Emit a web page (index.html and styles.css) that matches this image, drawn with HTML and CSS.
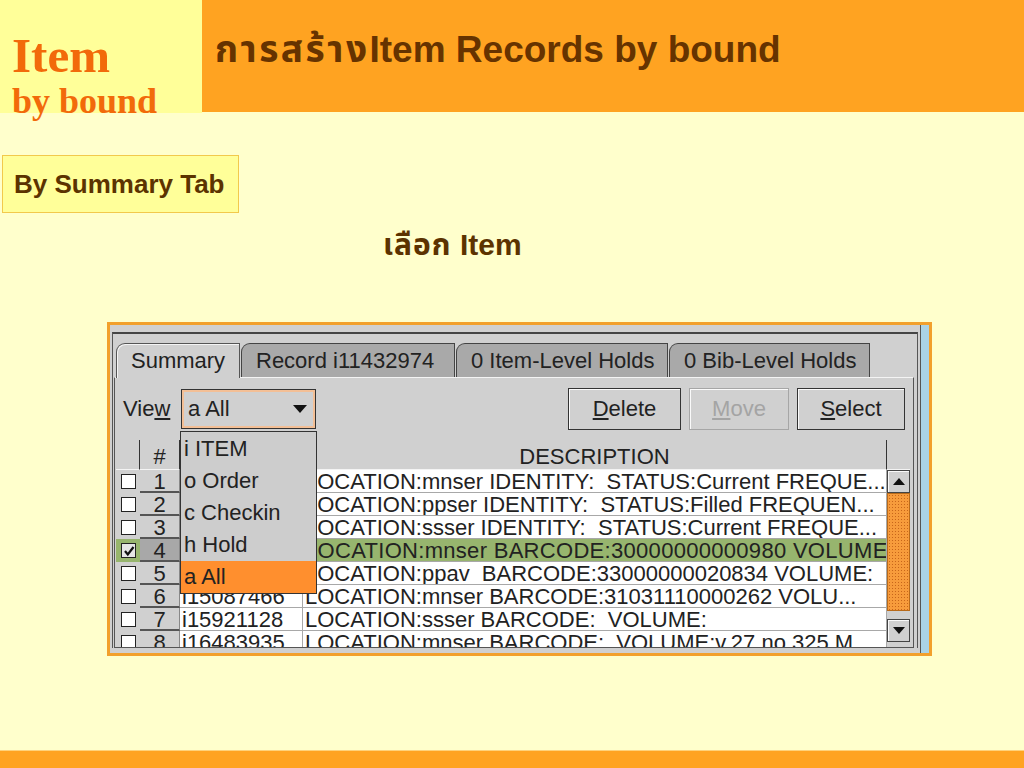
FILE: index.html
```html
<!DOCTYPE html>
<html lang="th">
<head>
    <meta charset="UTF-8">
    <meta name="viewport" content="width=device-width, initial-scale=1.0">
    <title>Item by bound</title>
    <link rel="stylesheet" href="styles.css">
</head>
<body>
<div class="slide">
    <header class="top">
        <div class="brand">
            <div class="brand-main">Item</div>
            <div class="brand-sub">by bound</div>
        </div>
        <h1 class="title"><span class="th-wide">การสร้าง</span>Item Records by bound</h1>
    </header>

    <div class="section-tag">By Summary Tab</div>
    <p class="step"><span class="th">เลือก</span> Item</p>

    <div class="shot">
        <div class="win">
            <div class="frame">
                <div class="tabs">
                    <div class="tab active">Summary</div>
                    <div class="tab">Record i11432974</div>
                    <div class="tab">0 Item-Level Holds</div>
                    <div class="tab">0 Bib-Level Holds</div>
                </div>
                <div class="tab-body">
                    <div class="toolbar">
                        <span class="view-label">Vie<u>w</u></span>
                        <div class="combo">
                            <span class="combo-value">a All</span>
                            <svg class="combo-arrow" width="14" height="8" viewBox="0 0 14 8"><path d="M0 0 H14 L7 8 Z" fill="#111"/></svg>
                            <ul class="combo-list">
                                <li>i ITEM</li>
                                <li>o Order</li>
                                <li>c Checkin</li>
                                <li>h Hold</li>
                                <li class="picked">a All</li>
                            </ul>
                        </div>
                        <div class="buttons">
                            <button class="btn btn-delete"><u>D</u>elete</button>
                            <button class="btn btn-move" disabled><u>M</u>ove</button>
                            <button class="btn btn-select"><u>S</u>elect</button>
                        </div>
                    </div>

                    <div class="grid">
                        <div class="hcell"></div>
                        <div class="hcell">#</div>
                        <div class="hcell"></div>
                        <div class="hcell">DESCRIPTION</div>
                        <div class="hcell hcell-last"></div>

                        <div class="chk"><span class="box"></span></div>
                        <div class="num">1</div>
                        <div class="cell">i11432970</div>
                        <div class="cell">LOCATION:mnser IDENTITY:&nbsp; STATUS:Current FREQUE...</div>

                        <div class="chk"><span class="box"></span></div>
                        <div class="num">2</div>
                        <div class="cell">i11432971</div>
                        <div class="cell">LOCATION:ppser IDENTITY:&nbsp; STATUS:Filled FREQUEN...</div>

                        <div class="chk"><span class="box"></span></div>
                        <div class="num">3</div>
                        <div class="cell">i11432972</div>
                        <div class="cell">LOCATION:ssser IDENTITY:&nbsp; STATUS:Current FREQUE...</div>

                        <div class="chk sel"><span class="box checked"><svg width="12" height="12" viewBox="0 0 12 12"><path d="M2 6 L4.8 9.5 L10.5 2" stroke="#111" stroke-width="2.2" fill="none"/></svg></span></div>
                        <div class="num sel">4</div>
                        <div class="cell sel">i11432974</div>
                        <div class="cell sel wide-digits">LOCATION:mnser BARCODE:30000000000980 VOLUME</div>

                        <div class="chk"><span class="box"></span></div>
                        <div class="num">5</div>
                        <div class="cell">i12563320</div>
                        <div class="cell">LOCATION:ppav&nbsp; BARCODE:33000000020834 VOLUME:</div>

                        <div class="chk"><span class="box"></span></div>
                        <div class="num">6</div>
                        <div class="cell">i15087466</div>
                        <div class="cell">LOCATION:mnser BARCODE:31031110000262 VOLU...</div>

                        <div class="chk"><span class="box"></span></div>
                        <div class="num">7</div>
                        <div class="cell">i15921128</div>
                        <div class="cell">LOCATION:ssser BARCODE:&nbsp; VOLUME:</div>

                        <div class="chk"><span class="box"></span></div>
                        <div class="num">8</div>
                        <div class="cell">i16483935</div>
                        <div class="cell">LOCATION:mnser BARCODE:&nbsp; VOLUME:v.27 no.325 M...</div>

                        <div class="scrollbar">
                            <div class="sb-btn"><svg width="12" height="7" viewBox="0 0 12 7"><path d="M0 7 H12 L6 0 Z" fill="#111"/></svg></div>
                            <div class="sb-thumb"></div>
                            <div class="sb-track"></div>
                            <div class="sb-btn"><svg width="12" height="7" viewBox="0 0 12 7"><path d="M0 0 H12 L6 7 Z" fill="#111"/></svg></div>
                        </div>
                    </div>
                </div>
            </div>
        </div>
        <div class="edge"></div>
    </div>

    <footer class="bottom-bar"></footer>
</div>
</body>
</html>
```

FILE: styles.css
```css
body {
    margin: 0;
    background-color: #ffffcc;
    font-family: 'Liberation Sans', 'Noto Sans Thai', 'Noto Sans', sans-serif;
}
.slide {
    display: flex;
    flex-direction: column;
    width: 1024px;
    height: 768px;
    overflow: hidden;
}

/* header */
.top {
    display: flex;
    height: 113px;
}
.brand {
    width: 190px;
    padding-left: 12px;
    background-color: #ffff99;
    font-family: 'Liberation Serif', serif;
    font-weight: bold;
    color: #f26a0a;
}
.brand-main {
    font-size: 49px;
    line-height: 48px;
    padding-top: 32px;
    height: 51px;
}
.brand-sub {
    font-size: 36px;
    line-height: 36px;
    white-space: nowrap;
}
.title {
    flex: 1;
    margin: 0;
    height: 82px;
    padding: 30px 0 0 13px;
    background-color: #ffa321;
    color: #663300;
    font-size: 37px;
    font-weight: bold;
    line-height: 40px;
}
.th-wide {
    letter-spacing: 2.5px;
}

/* captions */
.section-tag {
    width: 224px;
    height: 56px;
    margin: 42px 0 0 2px;
    padding-left: 11px;
    background-color: #ffff99;
    border: 1px solid #f2c94c;
    color: #5c3300;
    font-size: 26px;
    font-weight: bold;
    line-height: 56px;
}
.step {
    margin: 14px 0 0 383px;
    color: #5c3300;
    font-size: 30px;
    font-weight: bold;
    line-height: 36px;
}
.step .th {
    letter-spacing: 1px;
}

/* application screenshot */
.shot {
    display: flex;
    width: 819px;
    height: 328px;
    margin: 59px 0 0 107px;
    border: 3px solid #f2a02c;
    color: #222;
    font-size: 22px;
}
.win {
    flex: 1;
    padding: 7px 2px 5px 2px;
    background-color: #d0d0d0;
}
.frame {
    height: 100%;
    box-sizing: border-box;
    border-top: 2px solid #444;
    border-left: 1px solid #555;
    border-right: 1px solid #555;
    padding: 9px 3px 0 1px;
}
.edge {
    width: 8px;
    border-left: 1px solid #555;
    background-color: #aad3e6;
}

.tabs {
    display: flex;
    height: 34px;
    margin-left: 2px;
}
.tab {
    box-sizing: border-box;
    height: 34px;
    padding: 0 14px;
    margin-right: 1px;
    border: 1px solid #444;
    border-bottom: none;
    border-top-left-radius: 9px;
    background-color: #a9a9a9;
    line-height: 34px;
    white-space: nowrap;
}
.tab:nth-child(1) { width: 124px; }
.tab:nth-child(2) { width: 214px; }
.tab:nth-child(3) { width: 212px; }
.tab:nth-child(4) { width: 201px; }
.tab.active {
    background-color: #d0d0d0;
    border-color: #555;
    box-shadow: inset 1px 1px 0 #f4f4f4;
    position: relative;
    z-index: 1;
    height: 35px;
}

.tab-body {
    border: 1px solid #555;
    border-top-color: #f4f4f4;
    padding-left: 1px;
}

.toolbar {
    display: flex;
    align-items: center;
    height: 42px;
    margin: 10px 8px 10px 7px;
}
.view-label {
    width: 58px;
}
.combo {
    position: relative;
    display: flex;
    align-items: center;
    box-sizing: border-box;
    width: 135px;
    height: 40px;
    border: 1px solid #333;
    box-shadow: inset 0 0 0 2px #f3bf96;
    padding: 0 8px 0 6px;
}
.combo-value {
    flex: 1;
}
.combo-list {
    position: absolute;
    top: 41px;
    left: -2px;
    z-index: 5;
    width: 135px;
    margin: 0;
    padding: 1px 0 0;
    list-style: none;
    background-color: #cdcdcd;
    border: 1px solid #333;
}
.combo-list li {
    height: 32px;
    padding-left: 3px;
    line-height: 32px;
}
.combo-list li.picked {
    background-color: #ff8f2e;
}

.buttons {
    display: flex;
    gap: 8px;
    margin-left: auto;
}
.btn {
    height: 42px;
    padding: 0;
    border: 1px solid #333;
    background-color: #d0d0d0;
    box-shadow: inset 1px 1px 0 #fafafa;
    color: #222;
    font-family: inherit;
    font-size: 22px;
}
.btn-delete { width: 113px; }
.btn-move {
    width: 100px;
    border-color: #a6a6a6;
    color: #a4a4a4;
}
.btn-select { width: 108px; }

/* table */
.grid {
    display: grid;
    grid-template-columns: 24px 40px 123px 584px 23px;
    grid-template-rows: 30px repeat(8, 23px);
    height: 207px;
    overflow: hidden;
    line-height: 23px;
}
.hcell {
    box-sizing: border-box;
    border-right: 1px solid #333;
    border-bottom: 1px solid #f4f4f4;
    background-color: #d0d0d0;
    text-align: center;
    line-height: 34px;
}
.hcell-last {
    border-right: none;
}
.chk {
    display: flex;
    align-items: center;
    padding-left: 5px;
    background-color: #d0d0d0;
}
.box {
    display: flex;
    align-items: center;
    justify-content: center;
    width: 13px;
    height: 13px;
    border: 1px solid #222;
    background-color: #fff;
}
.box.checked {
    background-color: #e6e6e6;
}
.num {
    box-sizing: border-box;
    border-bottom: 2px solid #555;
    border-right: 1px solid #888;
    background-color: #d0d0d0;
    text-align: center;
}
.num.sel {
    background-color: #a8a8a8;
}
.cell {
    box-sizing: border-box;
    padding-left: 2px;
    border-right: 1px solid #a8a8a8;
    border-bottom: 1px solid #a8a8a8;
    background-color: #fff;
    white-space: nowrap;
    overflow: hidden;
}
.cell.sel,
.chk.sel {
    background-color: #97b56e;
}
.wide-digits {
    letter-spacing: 0.3px;
}

.scrollbar {
    grid-column: 5;
    grid-row: 2 / 10;
    display: flex;
    flex-direction: column;
    height: 172px;
    background-color: #d0d0d0;
}
.sb-btn {
    display: flex;
    align-items: center;
    justify-content: center;
    box-sizing: border-box;
    height: 23px;
    border: 1px solid #444;
    box-shadow: inset 1px 1px 0 #fafafa;
}
.sb-thumb {
    height: 118px;
    box-sizing: border-box;
    border: 1px solid #b86a1a;
    background-color: #f79c3c;
    background-image: radial-gradient(#c8661a 0.7px, transparent 0.9px);
    background-size: 3px 3px;
}
.sb-track {
    height: 8px;
}

.bottom-bar {
    margin-top: auto;
    height: 17px;
    background-color: #ffa321;
    border-top: 1px solid #ffd27a;
}
```
